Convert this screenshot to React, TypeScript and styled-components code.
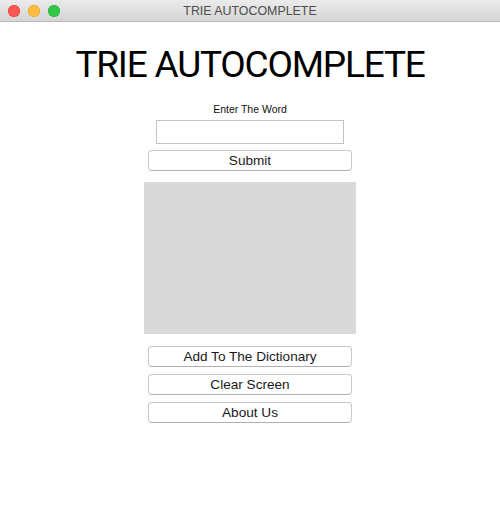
import styled, { createGlobalStyle } from 'styled-components'

const GlobalStyle = createGlobalStyle`
  html, body {
    margin: 0;
    padding: 0;
    background: #ffffff;
  }
  body {
    font-family: 'Liberation Sans', Arial, sans-serif;
  }
`

const Window = styled.div`
  width: 500px;
  height: 522px;
  display: flex;
  flex-direction: column;
  background: #ffffff;
  overflow: hidden;
`

const TitleBar = styled.div`
  height: 22px;
  flex: none;
  position: relative;
  display: flex;
  align-items: center;
  justify-content: center;
  background: linear-gradient(#ebebeb, #d5d5d5);
  border-bottom: 1px solid #b9b9b9;
  box-sizing: border-box;
`

const Lights = styled.div`
  position: absolute;
  left: 8px;
  top: 5px;
  display: flex;
  gap: 8px;
`

const Light = styled.span<{ $color: string; $edge: string }>`
  width: 12px;
  height: 12px;
  border-radius: 50%;
  background: ${(p) => p.$color};
  box-shadow: inset 0 0 0 0.5px ${(p) => p.$edge};
`

const WindowTitle = styled.span`
  font-size: 12.4px;
  color: #4d4d4d;
`

const Content = styled.div`
  display: flex;
  flex-direction: column;
  align-items: center;
`

const Heading = styled.h1`
  margin: 21px 0 0;
  font-family: Roboto, 'Liberation Sans', Arial, sans-serif;
  font-weight: 400;
  font-size: 37px;
  letter-spacing: -1.2px;
  line-height: 44px;
  color: #000;
`

const Label = styled.div`
  margin-top: 16px;
  font-size: 10.5px;
  line-height: 13px;
  color: #111;
`

const WordInput = styled.input`
  margin-top: 4px;
  width: 188px;
  height: 24px;
  box-sizing: border-box;
  border: 1px solid #c4c4c4;
  outline: none;
  background: #fff;
  padding: 0 4px;
`

const Button = styled.button<{ $gap?: number }>`
  margin-top: ${(p) => p.$gap ?? 7}px;
  width: 204px;
  height: 21px;
  box-sizing: border-box;
  border: 1px solid #c8c8c8;
  border-bottom-color: #b0b0b0;
  border-radius: 4px;
  background: #ffffff;
  font-family: 'Liberation Sans', Arial, sans-serif;
  font-size: 13.6px;
  color: #1a1a1a;
  padding: 0;
  line-height: 19px;
`

const Output = styled.div`
  margin-top: 11px;
  width: 212px;
  height: 152px;
  background: #d9d9d9;
`

export default function App() {
  return (
    <>
      <GlobalStyle />
      <Window>
        <TitleBar>
          <Lights>
            <Light $color="#fc5753" $edge="#df3d35" />
            <Light $color="#fdbc40" $edge="#de9f34" />
            <Light $color="#33c748" $edge="#27aa35" />
          </Lights>
          <WindowTitle>TRIE AUTOCOMPLETE</WindowTitle>
        </TitleBar>
        <Content>
          <Heading>TRIE AUTOCOMPLETE</Heading>
          <Label>Enter The Word</Label>
          <WordInput />
          <Button $gap={6}>Submit</Button>
          <Output />
          <Button $gap={12}>Add To The Dictionary</Button>
          <Button>Clear Screen</Button>
          <Button>About Us</Button>
        </Content>
      </Window>
    </>
  )
}
